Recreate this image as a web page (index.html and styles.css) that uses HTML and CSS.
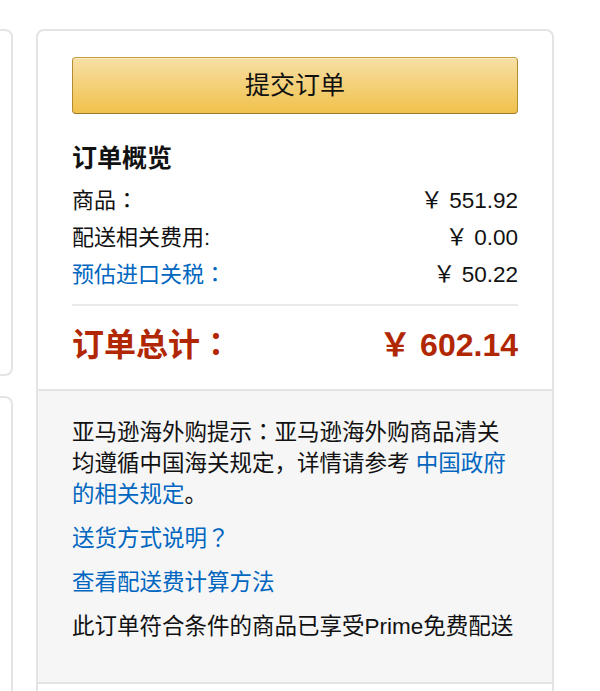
FILE: index.html
```html
<!DOCTYPE html>
<html lang="zh-CN">
<head>
<meta charset="utf-8">
<title>订单概览</title>
<link rel="stylesheet" href="styles.css">
</head>
<body>
<div class="page">
  <div class="side">
    <div class="side-card side-card-top"></div>
    <div class="side-card side-card-bottom"></div>
  </div>
  <div class="summary">
    <div class="summary-main">
      <button class="place-order" type="button">提交订单</button>
      <h3 class="summary-title">订单概览</h3>
      <div class="row"><span>商品<span class="punct" lang="ja">：</span></span><span class="amount">￥ 551.92</span></div>
      <div class="row"><span>配送相关费用:</span><span class="amount">￥ 0.00</span></div>
      <div class="row"><a class="link" href="#">预估进口关税<span class="punct" lang="ja">：</span></a><span class="amount">￥ 50.22</span></div>
      <hr class="divider">
      <div class="row total"><span>订单总计<span class="punct" lang="ja">：</span></span><span class="amount">￥ 602.14</span></div>
    </div>
    <div class="summary-info">
      <p class="info-p">亚马逊海外购提示<span class="punct" lang="ja">：</span>亚马逊海外购商品清关均遵循中国海关规定，详情请参考 <a class="link" href="#">中国政府的相关规定</a>。</p>
      <p class="info-p"><a class="link" href="#">送货方式说明<span class="punct" lang="ja">？</span></a></p>
      <p class="info-p"><a class="link" href="#">查看配送费计算方法</a></p>
      <p class="info-p">此订单符合条件的商品已享受Prime免费配送</p>
    </div>
    <div class="summary-foot"></div>
  </div>
</div>
</body>
</html>
```

FILE: styles.css
```css
html, body {
  margin: 0;
  padding: 0;
  background: #ffffff;
}

body {
  font-family: "Liberation Sans", "Noto Sans CJK SC", sans-serif;
  color: #111111;
  overflow: hidden;
}

.page {
  display: flex;
  align-items: flex-start;
  gap: 23px;
  padding-top: 29px;
}

.side {
  width: 13px;
  flex: none;
  display: flex;
  flex-direction: column;
  gap: 20px;
}

.side-card {
  box-sizing: border-box;
  border: 2px solid #e4e4e4;
  border-left: none;
  border-radius: 0 8px 8px 0;
  background: #fff;
}

.side-card-top {
  height: 347px;
}

.side-card-bottom {
  height: 400px;
}

.summary {
  box-sizing: border-box;
  width: 518px;
  flex: none;
  border: 2px solid #e4e4e4;
  border-radius: 8px 8px 0 0;
  background: #fff;
}

.summary-main {
  padding: 26px 34px 27px;
}

.place-order {
  display: block;
  box-sizing: border-box;
  width: 100%;
  height: 57px;
  margin: 0;
  padding: 0 0 5px;
  border: 1px solid;
  border-color: #c89f3f #b38b30 #9c7a28;
  border-radius: 4px;
  background: linear-gradient(to bottom, #f7dfa5, #f0c14b);
  box-shadow: inset 0 1px 0 rgba(255, 255, 255, 0.4);
  font-family: "Noto Sans CJK SC", sans-serif;
  font-size: 25px;
  line-height: 30px;
  color: #111;
  cursor: pointer;
}

.summary-title {
  margin: 26px 0 3px;
  font-size: 25px;
  line-height: 36px;
  font-weight: bold;
  color: #111;
}

.punct {
  font-family: "Noto Sans CJK JP", sans-serif;
  line-height: 0;
}

.row {
  display: flex;
  justify-content: space-between;
  align-items: center;
  height: 37px;
  font-size: 22px;
  color: #111;
}

.amount {
  font-size: 22.5px;
}

.link {
  color: #0066c0;
  text-decoration: none;
}

.divider {
  margin: 14px 0 0;
  height: 2px;
  border: none;
  background: #e9e9e9;
}

.row.total {
  margin-top: 16px;
  height: 40px;
  font-size: 32px;
  font-weight: bold;
  color: #b12704;
}

.row.total .amount {
  font-size: 32px;
}

.summary-info {
  padding: 26px 34px 40px;
  background: #f6f6f6;
  border-top: 2px solid #e4e4e4;
  border-bottom: 2px solid #e4e4e4;
}

.info-p {
  margin: 13px 0 0;
  font-size: 22.5px;
  line-height: 31px;
  color: #111;
}

.info-p:first-child {
  margin-top: 0;
}

.summary-foot {
  height: 80px;
}
```
